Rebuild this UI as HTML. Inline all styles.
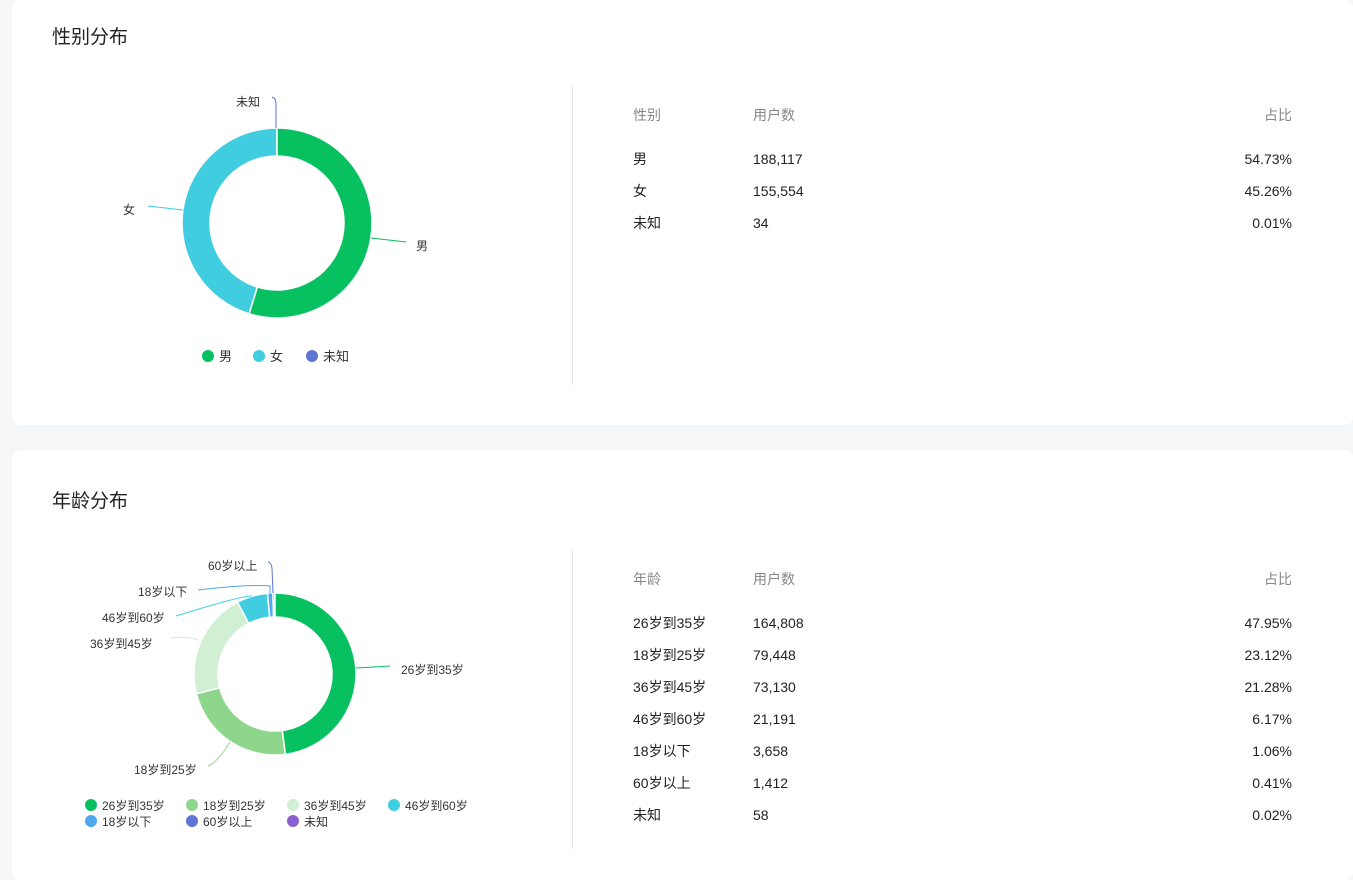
<!DOCTYPE html>
<html><head><meta charset="utf-8"><style>
*{margin:0;padding:0;box-sizing:border-box}
body{width:1353px;height:873px;background:#f5f6f7;font-family:"Liberation Sans","Noto Sans CJK SC",sans-serif;color:#222;overflow:hidden;position:relative}
.card{position:absolute;left:12px;width:1341px;background:#fff;border-radius:8px}
.title{position:absolute;left:40px;font-size:19px;color:#222;line-height:24px}
.div{position:absolute;left:560px;width:1px;background:#e8e8e8}
.t{position:absolute;font-size:14px;white-space:nowrap;line-height:20px;height:20px}
.h{color:#888}
svg{position:absolute;left:0;top:0}
svg text{font-family:"Liberation Sans","Noto Sans CJK SC",sans-serif;font-size:12px;fill:#333}
</style></head><body>
<div class="card" style="top:0;height:425px">
<div class="title" style="top:26px">性别分布</div>
<div class="div" style="top:85px;height:300px"></div>
</div>
<div class="card" style="top:450px;height:430px">
<div class="title" style="top:40px">年龄分布</div>
<div class="div" style="top:99px;height:300px"></div>
</div>
<svg id="s" width="1353" height="873">
<text x="236" y="106">未知</text>
<text x="123" y="214">女</text>
<text x="416" y="250">男</text>
<circle cx="208" cy="356" r="6" fill="#07c160"/><text x="219" y="361" style="font-size:13px">男</text>
<circle cx="259" cy="356" r="6" fill="#40cde0"/><text x="270" y="361" style="font-size:13px">女</text>
<circle cx="312" cy="356" r="6" fill="#5f75d4"/><text x="323" y="361" style="font-size:13px">未知</text>

<text x="208" y="570">60岁以上</text>
<text x="138" y="596">18岁以下</text>
<text x="102" y="622">46岁到60岁</text>
<text x="90" y="648">36岁到45岁</text>
<text x="401" y="674">26岁到35岁</text>
<text x="134" y="774">18岁到25岁</text>
<g style="font-size:12px">
<circle cx="91" cy="805" r="6" fill="#07c160"/><text x="102" y="810">26岁到35岁</text>
<circle cx="192" cy="805" r="6" fill="#8fd68d"/><text x="203" y="810">18岁到25岁</text>
<circle cx="293" cy="805" r="6" fill="#d0efd3"/><text x="304" y="810">36岁到45岁</text>
<circle cx="394" cy="805" r="6" fill="#40cde0"/><text x="405" y="810">46岁到60岁</text>
<circle cx="91" cy="821" r="6" fill="#4fa7ee"/><text x="102" y="826">18岁以下</text>
<circle cx="192" cy="821" r="6" fill="#5f75d4"/><text x="203" y="826">60岁以上</text>
<circle cx="293" cy="821" r="6" fill="#8a60d0"/><text x="304" y="826">未知</text>
</g>
<g fill="none" stroke-width="1">
<path d="M371 238 L406 242" stroke="#07c160"/>
<path d="M183 210 L148 206" stroke="#40cde0"/>
<path d="M276 128 L276 104 Q276 98 272 97" stroke="#5f75d4"/>
<path d="M356 668 L390 666" stroke="#07c160"/>
<path d="M230 742 Q218 762 208 766" stroke="#8fd68d"/>
<path d="M198 640 Q190 636 170 638" stroke="#d0efd3"/>
<path d="M252 596 Q240 596 176 616" stroke="#40cde0"/>
<path d="M270 594 L270 586 Q250 584 198 590" stroke="#4fa7ee"/>
<path d="M273 593 L272 568 Q271 562 268 562" stroke="#5f75d4"/>
</g>
</svg>
<div class="t h" style="left:633px;top:105px">性别</div>
<div class="t h" style="left:753px;top:105px">用户数</div>
<div class="t h" style="right:61px;top:105px">占比</div>
<div class="t" style="left:633px;top:149px">男</div><div class="t" style="left:753px;top:149px">188,117</div><div class="t" style="right:61px;top:149px">54.73%</div>
<div class="t" style="left:633px;top:181px">女</div><div class="t" style="left:753px;top:181px">155,554</div><div class="t" style="right:61px;top:181px">45.26%</div>
<div class="t" style="left:633px;top:213px">未知</div><div class="t" style="left:753px;top:213px">34</div><div class="t" style="right:61px;top:213px">0.01%</div>

<div class="t h" style="left:633px;top:569px">年龄</div>
<div class="t h" style="left:753px;top:569px">用户数</div>
<div class="t h" style="right:61px;top:569px">占比</div>
<div class="t" style="left:633px;top:613px">26岁到35岁</div><div class="t" style="left:753px;top:613px">164,808</div><div class="t" style="right:61px;top:613px">47.95%</div>
<div class="t" style="left:633px;top:645px">18岁到25岁</div><div class="t" style="left:753px;top:645px">79,448</div><div class="t" style="right:61px;top:645px">23.12%</div>
<div class="t" style="left:633px;top:677px">36岁到45岁</div><div class="t" style="left:753px;top:677px">73,130</div><div class="t" style="right:61px;top:677px">21.28%</div>
<div class="t" style="left:633px;top:709px">46岁到60岁</div><div class="t" style="left:753px;top:709px">21,191</div><div class="t" style="right:61px;top:709px">6.17%</div>
<div class="t" style="left:633px;top:741px">18岁以下</div><div class="t" style="left:753px;top:741px">3,658</div><div class="t" style="right:61px;top:741px">1.06%</div>
<div class="t" style="left:633px;top:773px">60岁以上</div><div class="t" style="left:753px;top:773px">1,412</div><div class="t" style="right:61px;top:773px">0.41%</div>
<div class="t" style="left:633px;top:805px">未知</div><div class="t" style="left:753px;top:805px">58</div><div class="t" style="right:61px;top:805px">0.02%</div>
<script>
function donut(cx,cy,R,r,vals,cols){
 var s=document.getElementById('s'),tot=vals.reduce(function(a,b){return a+b},0),a=0;
 vals.forEach(function(v,i){
  var b=a+v/tot*2*Math.PI;
  function p(rad,ang){return [cx+rad*Math.sin(ang),cy-rad*Math.cos(ang)]}
  var l=(b-a)>Math.PI?1:0,p1=p(R,a),p2=p(R,b),p3=p(r,b),p4=p(r,a);
  var d='M'+p1+' A'+R+' '+R+' 0 '+l+' 1 '+p2+' L'+p3+' A'+r+' '+r+' 0 '+l+' 0 '+p4+'Z';
  var e=document.createElementNS('http://www.w3.org/2000/svg','path');
  e.setAttribute('d',d);e.setAttribute('fill',cols[i]);e.setAttribute('stroke','#fff');e.setAttribute('stroke-width','1.5');
  s.insertBefore(e,s.firstChild);a=b;
 });
}
donut(277,223,95,67,[54.73,45.26,0.01],['#07c160','#40cde0','#5f75d4']);
donut(275,674,81,57,[47.95,23.12,21.28,6.17,1.06,0.41,0.02],['#07c160','#8fd68d','#d0efd3','#40cde0','#4fa7ee','#5f75d4','#8a60d0']);
</script>
</body></html>
